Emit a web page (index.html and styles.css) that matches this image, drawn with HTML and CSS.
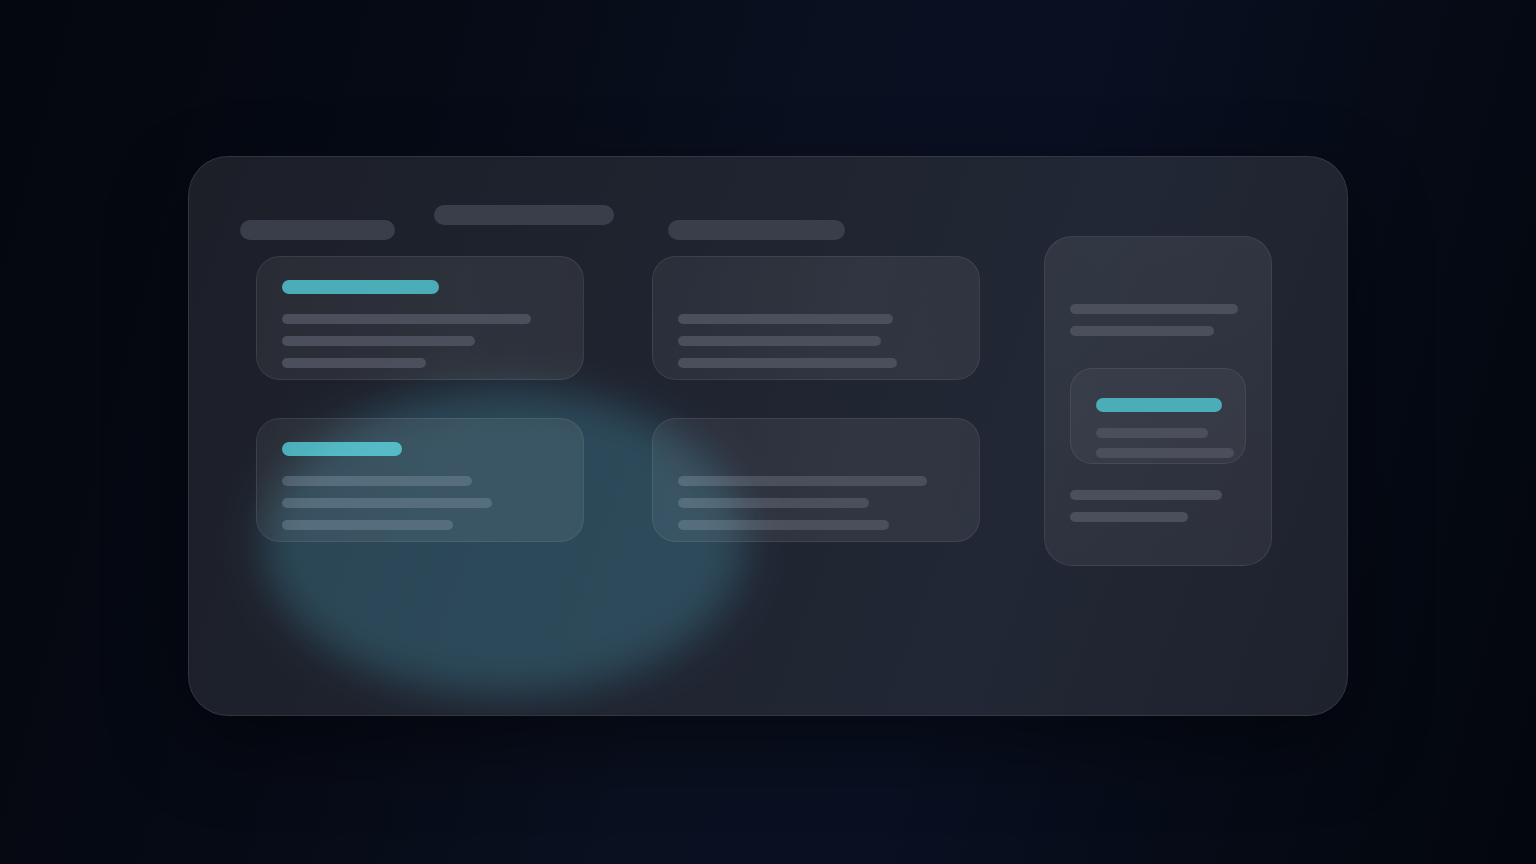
FILE: index.html
```html
<!DOCTYPE html>
<html lang="en">
<head>
<meta charset="utf-8">
<title>Skeleton dashboard</title>
<link rel="stylesheet" href="styles.css">
</head>
<body>
<div class="stage">
  <div class="panel">
    <div class="main">
      <div class="header">
        <div class="pill pill-a"></div>
        <div class="pill pill-b"></div>
        <div class="pill pill-c"></div>
      </div>
      <div class="grid">
        <div class="card">
          <div class="accent" style="width:157px"></div>
          <div class="lines">
            <div class="line" style="width:249px"></div>
            <div class="line" style="width:193px"></div>
            <div class="line" style="width:144px"></div>
          </div>
        </div>
        <div class="card">
          <div class="accent accent-empty"></div>
          <div class="lines">
            <div class="line" style="width:215px"></div>
            <div class="line" style="width:203px"></div>
            <div class="line" style="width:219px"></div>
          </div>
        </div>
        <div class="card">
          <div class="accent" style="width:120px"></div>
          <div class="lines">
            <div class="line" style="width:190px"></div>
            <div class="line" style="width:210px"></div>
            <div class="line" style="width:171px"></div>
          </div>
        </div>
        <div class="card">
          <div class="accent accent-empty"></div>
          <div class="lines">
            <div class="line" style="width:249px"></div>
            <div class="line" style="width:191px"></div>
            <div class="line" style="width:211px"></div>
          </div>
        </div>
      </div>
    </div>
    <div class="aside">
      <div class="lines">
        <div class="line" style="width:168px"></div>
        <div class="line" style="width:144px"></div>
      </div>
      <div class="inner">
        <div class="accent" style="width:126px"></div>
        <div class="lines tight">
          <div class="line" style="width:112px"></div>
          <div class="line" style="width:138px"></div>
        </div>
      </div>
      <div class="lines">
        <div class="line" style="width:152px"></div>
        <div class="line" style="width:118px"></div>
      </div>
    </div>
    <div class="glow"></div>
  </div>
</div>
</body>
</html>
```
FILE: styles.css
```css
* { box-sizing: border-box; }
html, body { margin: 0; padding: 0; }
body {
  width: 1536px;
  height: 864px;
  overflow: hidden;
  font-family: "Inter", "Liberation Sans", sans-serif;
  background:
    linear-gradient(105deg, #04070e 0%, #060a15 25%, #0a1020 48%, #091022 62%, #060b17 80%, #03060c 100%);
}
.stage {
  display: flex;
  justify-content: center;
  padding-top: 156px;
}
.panel {
  position: relative;
  width: 1160px;
  height: 560px;
  border-radius: 40px;
  border: 1px solid rgba(255, 255, 255, 0.09);
  background: linear-gradient(110deg, #1c1f28 0%, #1f2430 45%, #222735 70%, #1e222d 100%);
  box-shadow: 0 30px 80px rgba(0, 0, 0, 0.45);
  display: flex;
  align-items: flex-start;
  padding: 48px 0 0 51px;
  overflow: hidden;
}
.main {
  width: 740px;
  display: flex;
  flex-direction: column;
}
.header {
  display: flex;
  align-items: flex-start;
  height: 35px;
}
.pill {
  height: 20px;
  border-radius: 10px;
  background: #3a3e4a;
}
.pill-a { width: 155px; margin-top: 15px; }
.pill-b { width: 180px; margin-left: 39px; }
.pill-c { width: 177px; margin-left: 54px; margin-top: 15px; }
.grid {
  margin: 16px 0 0 16px;
  display: grid;
  grid-template-columns: 328px 328px;
  column-gap: 68px;
  row-gap: 38px;
}
.card {
  height: 124px;
  border-radius: 24px;
  border: 1px solid rgba(255, 255, 255, 0.08);
  background: linear-gradient(100deg, rgba(255,255,255,0.055), rgba(255,255,255,0.075) 60%, rgba(255,255,255,0.065));
  padding: 23px 0 0 25px;
  display: flex;
  flex-direction: column;
  gap: 20px;
}
.accent {
  height: 14px;
  border-radius: 7px;
  background: #4aadb8;
}
.accent-empty { background: transparent; }
.lines {
  display: flex;
  flex-direction: column;
  gap: 12px;
}
.lines.tight { gap: 10px; }
.line {
  height: 10px;
  border-radius: 5px;
  background: #4a4f5b;
}
.aside {
  margin: 31px 0 0 64px;
  width: 228px;
  height: 330px;
  border-radius: 28px;
  border: 1px solid rgba(255, 255, 255, 0.08);
  background: linear-gradient(170deg, rgba(255,255,255,0.075), rgba(255,255,255,0.06));
  padding: 67px 0 0 25px;
  display: flex;
  flex-direction: column;
}
.inner {
  margin-top: 32px;
  width: 176px;
  height: 96px;
  border-radius: 22px;
  border: 1px solid rgba(255, 255, 255, 0.07);
  background: rgba(255, 255, 255, 0.045);
  padding: 29px 0 0 25px;
  display: flex;
  flex-direction: column;
  gap: 16px;
  margin-bottom: 26px;
}
.glow {
  position: absolute;
  left: 74px;
  top: 232px;
  width: 482px;
  height: 306px;
  border-radius: 50%;
  background: rgb(16, 44, 52);
  filter: blur(20px);
  mix-blend-mode: screen;
  pointer-events: none;
}
```
